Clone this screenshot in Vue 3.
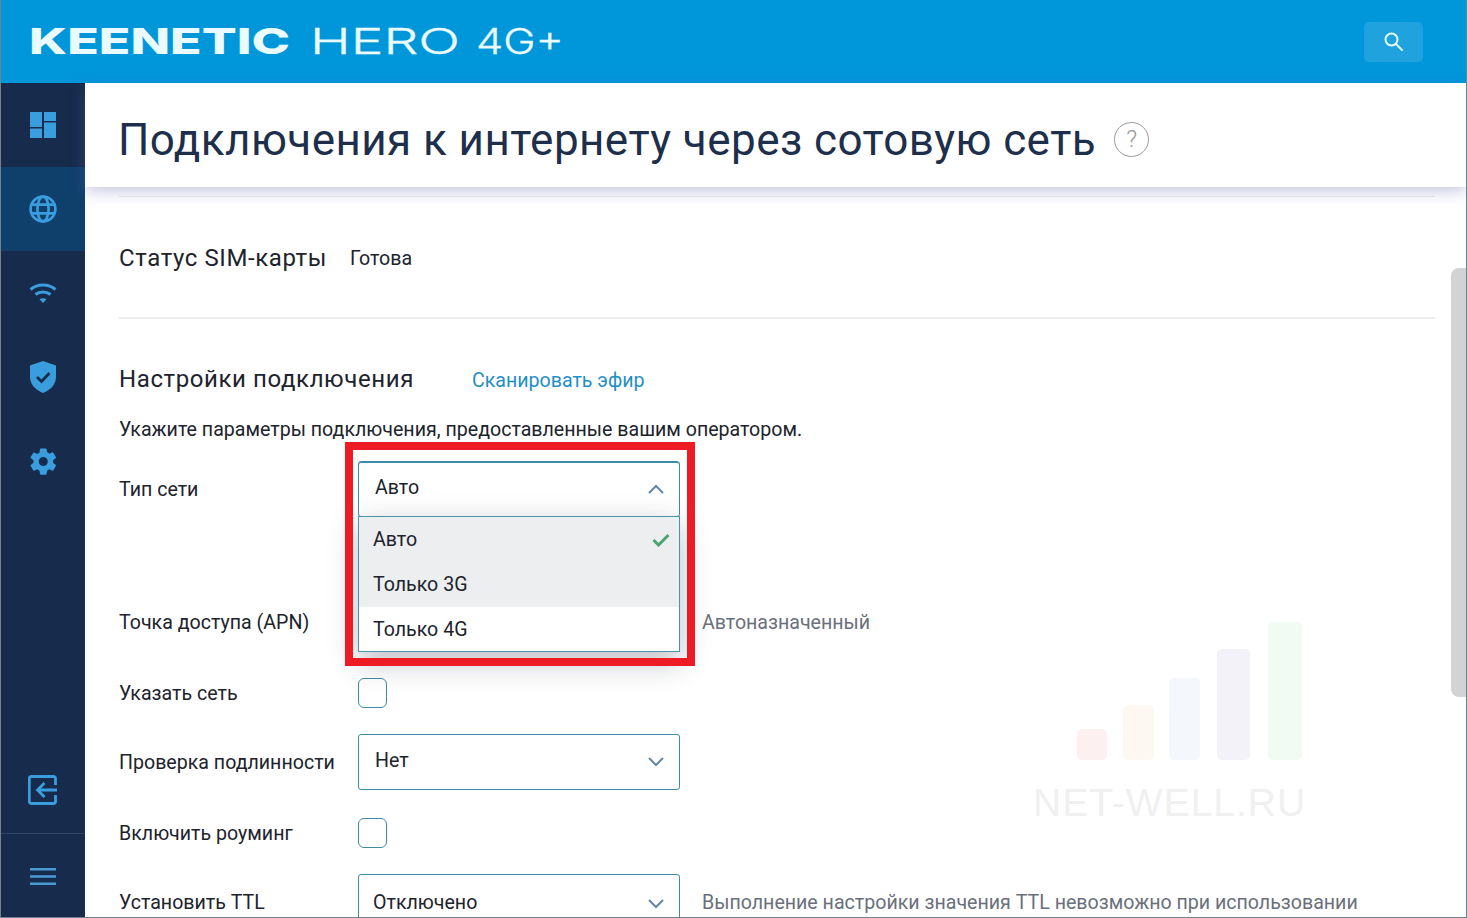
<script setup>
const options = [
  { label: 'Авто', active: true, selected: true },
  { label: 'Только 3G', active: true },
  { label: 'Только 4G' },
]

const bars = [
  { height: 31, width: 30, gap: 0, color: '#fdf0f0' },
  { height: 55, width: 31, gap: 16, color: '#fef8f3' },
  { height: 82, width: 31, gap: 15, color: '#f4f8fc' },
  { height: 111, width: 33, gap: 17, color: '#f2f2f8' },
  { height: 138, width: 34, gap: 18, color: '#f2faf4' },
]
</script>

<template>
  <div class="page">
    <header class="topbar">
      <svg class="logo" width="540" height="44" viewBox="0 0 540 44">
        <text x="-1" y="35" class="logo-brand" textLength="261" lengthAdjust="spacingAndGlyphs">KEENETIC</text>
        <text x="280" y="35" class="logo-model" textLength="150" lengthAdjust="spacingAndGlyphs">HERO</text>
        <text x="446" y="35" class="logo-model" textLength="88" lengthAdjust="spacingAndGlyphs">4G+</text>
      </svg>
      <button class="search">
        <svg width="22" height="22" viewBox="0 0 22 22" fill="none" stroke="#e6fbff" stroke-width="2">
          <circle cx="8.500" cy="8.500" r="6" />
          <path d="M13 13l6 6" stroke-linecap="round" />
        </svg>
      </button>
    </header>

    <div class="body">
      <nav class="sidebar">
        <a class="nav-item">
          <svg width="28" height="28" viewBox="0 0 28 28" fill="#3a9ede">
            <path d="M1 1h12v15H1zM15 1h12v9H15zM15 11.500h12V27H15zM1 17.500h12V27H1z" />
          </svg>
        </a>
        <a class="nav-item active">
          <svg width="30" height="30" viewBox="0 0 30 30" fill="none" stroke="#3a9ede" stroke-width="2.600">
            <circle cx="15" cy="15" r="12.400" />
            <ellipse cx="15" cy="15" rx="5.600" ry="12.400" />
            <path d="M3.600 10.600h22.800M3.600 19.400h22.800" />
          </svg>
        </a>
        <a class="nav-item">
          <svg width="28" height="22" viewBox="0 0 28 22" fill="none" stroke="#3a9ede" stroke-width="3">
            <path d="M1.500 7.500c7-6 18-6 25 0" />
            <path d="M6.500 12.500c4.300-3.500 10.700-3.500 15 0" />
            <path d="M10.500 17.300L14 21l3.500-3.700c-2-1.500-5-1.500-7 0z" fill="#3a9ede" stroke="none" />
          </svg>
        </a>
        <a class="nav-item">
          <svg width="26" height="32" viewBox="0 0 26 32">
            <path d="M13 0l13 4.500v11c0 8-5.500 13.500-13 16.500C5.500 29 0 23.500 0 15.500v-11z" fill="#3a9ede" />
            <path d="M7 16l4.500 4.500L19.500 12" fill="none" stroke="#172b4d" stroke-width="2.800" />
          </svg>
        </a>
        <a class="nav-item">
          <svg width="31" height="31" viewBox="0 0 24 24" fill="#3a9ede">
            <path d="M19.400 13c.04-.32.07-.66.07-1s-.03-.68-.07-1l2.150-1.680c.2-.15.25-.43.12-.66l-2.040-3.530c-.12-.22-.4-.31-.62-.22l-2.540 1.020c-.53-.4-1.100-.74-1.720-1l-.39-2.700A.5.500 0 0 0 13.870 2H9.800a.5.500 0 0 0-.5.430l-.38 2.700c-.62.26-1.200.6-1.730 1L4.650 5.110c-.23-.09-.5 0-.62.22L1.990 8.660c-.13.230-.07.510.12.660L4.260 11c-.04.320-.07.670-.07 1s.03.680.07 1l-2.150 1.680c-.19.150-.25.430-.12.660l2.040 3.530c.12.220.39.310.62.220l2.540-1.020c.53.400 1.100.740 1.730 1l.38 2.700c.04.250.25.430.5.430h4.070c.25 0 .47-.18.500-.43l.39-2.700c.62-.26 1.190-.6 1.720-1l2.540 1.020c.23.090.5 0 .62-.22l2.040-3.530c.13-.23.08-.51-.12-.66zM11.830 15.500a3.500 3.500 0 1 1 0-7 3.500 3.500 0 0 1 0 7z" />
          </svg>
        </a>
        <a class="nav-item push">
          <svg width="30" height="30" viewBox="0 0 30 30" fill="none" stroke="#3a9ede" stroke-width="2.800">
            <path d="M27.500 10V3.500a2 2 0 0 0-2-2H3.300a2 2 0 0 0-2 2v23a2 2 0 0 0 2 2h22.200a2 2 0 0 0 2-2V20" />
            <path d="M29 15H10M16.500 8l-7 7 7 7" />
          </svg>
        </a>
        <a class="nav-item menu">
          <svg width="26" height="18" viewBox="0 0 26 18" fill="#4a9ad4">
            <path d="M0 0h26v2.400H0zM0 7.300h26v2.400H0zM0 14.600h26V17H0z" />
          </svg>
        </a>
      </nav>

      <main class="main">
        <div class="title-bar">
          <h1>Подключения к интернету через сотовую сеть</h1>
          <span class="help">?</span>
        </div>

        <div class="content">
          <section class="status">
            <h2>Статус SIM-карты</h2>
            <span>Готова</span>
          </section>

          <section class="settings">
            <div class="settings-head">
              <h2>Настройки подключения</h2>
              <a class="link">Сканировать эфир</a>
            </div>
            <p class="note">Укажите параметры подключения, предоставленные вашим оператором.</p>

            <div class="row type-row">
              <label>Тип сети</label>
              <div class="select open">
                <span>Авто</span>
                <svg class="chevron" width="18" height="10" viewBox="0 0 18 10" fill="none" stroke="#6188a8" stroke-width="2">
                  <path d="M2 9l7-7 7 7" />
                </svg>
                <ul class="dropdown">
                  <li v-for="option in options" :key="option.label" :class="{ active: option.active }">
                    {{ option.label }}
                    <svg v-if="option.selected" width="18" height="14" viewBox="0 0 18 14" fill="none" stroke="#4da672" stroke-width="3">
                      <path d="M1.500 7l5 5L16.500 2" />
                    </svg>
                  </li>
                </ul>
                <div class="highlight"></div>
              </div>
            </div>

            <div class="row apn-row">
              <label>Точка доступа (APN)</label>
              <div class="spacer"></div>
              <span class="hint">Автоназначенный</span>
            </div>

            <div class="row check-row">
              <label>Указать сеть</label>
              <span class="checkbox"></span>
            </div>

            <div class="row">
              <label>Проверка подлинности</label>
              <div class="select">
                <span>Нет</span>
                <svg class="chevron" width="18" height="10" viewBox="0 0 18 10" fill="none" stroke="#6188a8" stroke-width="2">
                  <path d="M2 1l7 7 7-7" />
                </svg>
              </div>
            </div>

            <div class="row check-row">
              <label>Включить роуминг</label>
              <span class="checkbox"></span>
            </div>

            <div class="row">
              <label>Установить TTL</label>
              <div class="select ttl">
                <span>Отключено</span>
                <svg class="chevron" width="18" height="10" viewBox="0 0 18 10" fill="none" stroke="#6188a8" stroke-width="2">
                  <path d="M2 1l7 7 7-7" />
                </svg>
              </div>
              <span class="hint">Выполнение настройки значения TTL невозможно при использовании</span>
            </div>
          </section>
        </div>

        <div class="scrollbar"></div>

        <div class="watermark">
          <div class="bars">
            <span
              v-for="bar in bars"
              :key="bar.color"
              :style="{ height: bar.height + 'px', width: bar.width + 'px', marginLeft: bar.gap + 'px', background: bar.color }"
            ></span>
          </div>
          <div class="mark-text">NET-WELL.RU</div>
        </div>
      </main>
    </div>
  </div>
</template>

<style scoped>
.page {
  position: relative;
  width: 1467px;
  height: 918px;
  box-sizing: border-box;
  display: flex;
  flex-direction: column;
  overflow: hidden;
  border-left: 1px solid #74808a;
  border-right: 1px solid #74808a;
  border-bottom: 1px solid #74808a;
  background: #fff;
  font-family: Roboto, "Liberation Sans", sans-serif;
  color: #20232c;
}

.topbar {
  height: 83px;
  flex-shrink: 0;
  display: flex;
  align-items: center;
  justify-content: space-between;
  padding: 0 43px 0 29px;
  background: #0096da;
}

.logo {
  display: block;
  margin-top: -2px;
  overflow: visible;
}

.logo-brand {
  font-family: Inter, sans-serif;
  font-size: 36px;
  font-weight: 800;
  fill: #eafcff;
}

.logo-model {
  font-family: Inter, sans-serif;
  font-size: 36px;
  font-weight: 300;
  fill: #eafcff;
  stroke: #eafcff;
  stroke-width: 0.3px;
}

.search {
  width: 59px;
  height: 40px;
  display: flex;
  align-items: center;
  justify-content: center;
  padding: 0;
  border: 0;
  border-radius: 5px;
  background: rgba(255, 255, 255, 0.12);
}

.body {
  position: relative;
  flex: 1;
  display: flex;
  min-height: 0;
}

.sidebar {
  width: 84px;
  flex-shrink: 0;
  display: flex;
  flex-direction: column;
  background: #172b4d;
}

.nav-item {
  height: 84px;
  flex-shrink: 0;
  display: flex;
  align-items: center;
  justify-content: center;
}

.nav-item.active {
  background: #0f3f6b;
}

.nav-item.push {
  margin-top: auto;
  padding-bottom: 2px;
  box-sizing: border-box;
}

.nav-item.menu {
  height: 84px;
  box-sizing: border-box;
  padding-top: 2px;
  border-top: 1px solid #2f4564;
}

.main {
  position: relative;
  flex: 1;
  min-width: 0;
}

.title-bar {
  position: relative;
  z-index: 1;
  height: 104px;
  box-sizing: border-box;
  display: flex;
  align-items: center;
  gap: 18px;
  padding: 10px 0 0 33px;
  background: #fff;
  box-shadow: 0 5px 14px rgba(100, 105, 170, 0.34);
}

h1 {
  margin: 0;
  font-size: 44px;
  font-weight: 400;
  letter-spacing: 0.44px;
  color: #1d2f4b;
}

.help {
  width: 35px;
  height: 35px;
  box-sizing: border-box;
  display: flex;
  align-items: center;
  justify-content: center;
  margin-top: -2px;
  border: 1px solid #9a9a9a;
  border-radius: 50%;
  font-size: 24px;
  font-weight: 300;
  color: #9a9a9a;
}

.content {
  margin: 9px 31px 0 34px;
  border-top: 1px solid #eeeef6;
}

.status {
  height: 118px;
  padding-top: 2px;
  display: flex;
  align-items: center;
  gap: 23px;
  border-bottom: 2px solid #eeeeee;
  font-size: 19.6px;
}

h2 {
  margin: 0;
  font-size: 24px;
  font-weight: 400;
  letter-spacing: 0.6px;
}

.settings-head {
  display: flex;
  align-items: center;
  gap: 58px;
  margin-top: 44px;
  height: 32px;
}

.link {
  margin-top: 2px;
  font-size: 19.6px;
  color: #1f8fc6;
}

.note {
  margin: 23px 0 19px;
  height: 24px;
  font-size: 19.6px;
  line-height: 24px;
}

.row {
  display: flex;
  align-items: center;
  margin-bottom: 28px;
  font-size: 19.6px;
}

.row label {
  width: 239px;
  flex-shrink: 0;
}

.type-row {
  margin-bottom: 77px;
}

.apn-row {
  height: 56px;
}

.spacer {
  width: 322px;
  flex-shrink: 0;
}

.check-row {
  margin-bottom: 26px;
}

.select {
  position: relative;
  width: 322px;
  height: 56px;
  flex-shrink: 0;
  box-sizing: border-box;
  display: flex;
  align-items: center;
  justify-content: space-between;
  padding: 0 14px 4px 16px;
  border: 1px solid #3d8ca6;
  border-radius: 3px;
  background: #fff;
}

.select.open {
  z-index: 2;
  box-shadow: inset 0 1px 0 #3d8ca6;
}

.chevron {
  margin-top: 4px;
}

.ttl {
  padding-left: 14px;
  padding-bottom: 0;
}

.hint {
  margin-left: 22px;
  color: #69707c;
  white-space: nowrap;
}

.dropdown {
  position: absolute;
  left: -1px;
  top: 54px;
  width: 322px;
  box-sizing: border-box;
  margin: 0;
  padding: 0;
  list-style: none;
  border: 1px solid #4a95ab;
  background: #fff;
  box-shadow: 0 10px 28px rgba(30, 40, 60, 0.3);
}

.dropdown li {
  height: 45px;
  box-sizing: border-box;
  display: flex;
  align-items: center;
  justify-content: space-between;
  padding: 0 9px 0 14px;
}

.dropdown li:last-child {
  height: 44px;
}

.dropdown li.active {
  background: #eceef0;
}

.highlight {
  position: absolute;
  left: -14px;
  top: -20px;
  width: 350px;
  height: 224px;
  box-sizing: border-box;
  border: 8px solid #ed1c24;
  pointer-events: none;
}

.checkbox {
  width: 29px;
  height: 30px;
  box-sizing: border-box;
  border: 1px solid #3d8ca6;
  border-radius: 6px;
}

.scrollbar {
  position: absolute;
  right: 0;
  top: 185px;
  width: 15px;
  height: 429px;
  border-radius: 8px 0 0 8px;
  background: #d3d3d3;
}

.watermark {
  position: absolute;
  left: 948px;
  top: 539px;
  width: 280px;
}

.bars {
  display: flex;
  align-items: flex-end;
  height: 138px;
  padding-left: 44px;
}

.bars span {
  flex-shrink: 0;
  border-radius: 5px;
}

.mark-text {
  margin-top: 21px;
  font-family: "Liberation Sans", sans-serif;
  font-size: 39px;
  line-height: 44px;
  letter-spacing: 1px;
  color: #f0f0f0;
  white-space: nowrap;
}
</style>

<style>
html,
body {
  margin: 0;
  overflow: hidden;
}
</style>
